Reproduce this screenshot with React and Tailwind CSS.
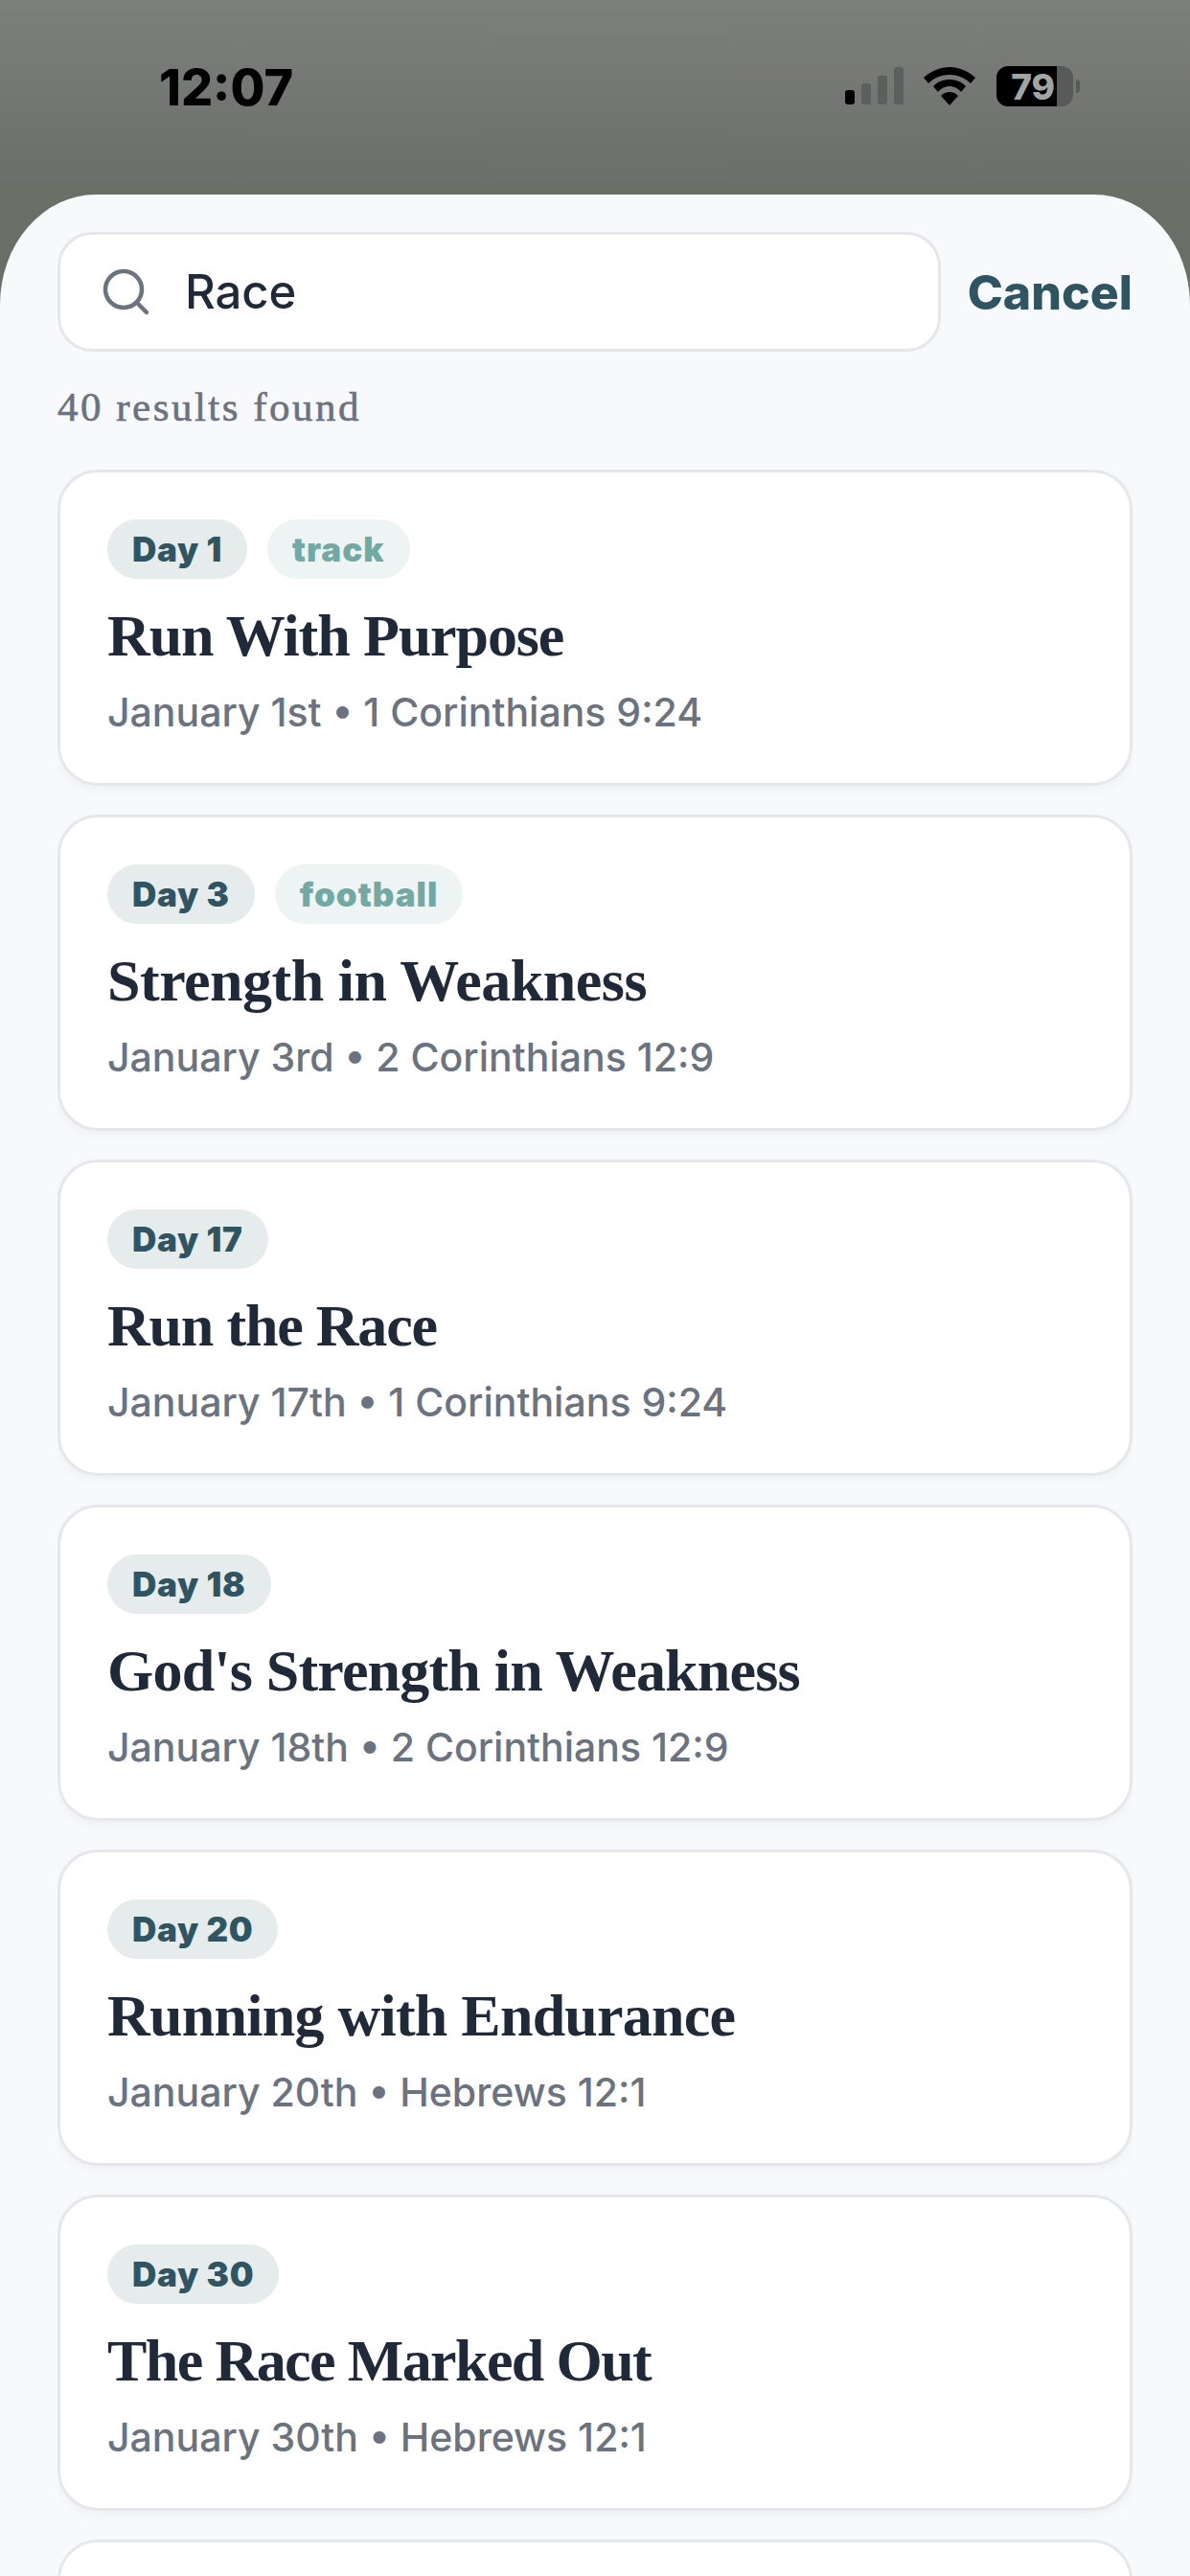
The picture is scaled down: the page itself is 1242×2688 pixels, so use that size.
const cards = [
  { day: "Day 1", tag: "track", title: "Run With Purpose", sub: "January 1st • 1 Corinthians 9:24", tracking: "tracking-[-1.1px]" },
  { day: "Day 3", tag: "football", title: "Strength in Weakness", sub: "January 3rd • 2 Corinthians 12:9", tracking: "tracking-[-0.5px]" },
  { day: "Day 17", title: "Run the Race", sub: "January 17th • 1 Corinthians 9:24", tracking: "tracking-[-1.2px]" },
  { day: "Day 18", title: "God's Strength in Weakness", sub: "January 18th • 2 Corinthians 12:9", tracking: "tracking-[-0.8px]" },
  { day: "Day 20", title: "Running with Endurance", sub: "January 20th • Hebrews 12:1", tracking: "tracking-[-0.75px]" },
  { day: "Day 30", title: "The Race Marked Out", sub: "January 30th • Hebrews 12:1", tracking: "tracking-[-1.6px]" },
];

function Card({ day, tag, title, sub, tracking }) {
  return (
    <div className="h-[330px] shrink-0 rounded-[42px] border-[3px] border-[#e5e7eb] bg-white pl-[49px] pr-[30px] pt-[49px] shadow-[0_4px_12px_rgba(0,0,0,0.04)]">
      <div className="flex h-[62px] gap-[21px]">
        <span className="flex h-[62px] items-center rounded-full bg-[#e6ebeb] px-[26px] text-[35px] font-black tracking-[0.7px] text-[#2f5563]">{day}</span>
        {tag && <span className="flex h-[62px] items-center rounded-full bg-[#eef4f3] px-[26px] text-[35px] font-black tracking-[1px] text-[#72a9a3]">{tag}</span>}
      </div>
      <div className={`mt-[23px] whitespace-nowrap font-['Liberation_Serif',serif] text-[62px] font-bold leading-[72px] text-[#1f2937] ${tracking}`}>{title}</div>
      <div className="mt-[20px] whitespace-nowrap text-[41px] font-medium leading-[48px] text-[#6b7280]">{sub}</div>
    </div>
  );
}

export default function App() {
  return (
    <div className="flex h-[2688px] w-[1242px] flex-col overflow-hidden bg-[linear-gradient(180deg,#7d7f7d_0px,#696e67_210px)] font-['Inter',sans-serif]">
      <div className="flex h-[203px] shrink-0 items-start justify-between pl-[166px] pr-[115px] pt-[62px]">
        <span className="text-[52px] font-extrabold leading-[60px] text-black">12:07</span>
        <div className="flex items-center pt-[7px]">
          <svg width="62" height="40" viewBox="0 0 62 40">
            <rect x="0" y="24" width="10" height="15" rx="3" fill="#000" />
            <rect x="17" y="17" width="10" height="22" rx="3" fill="#5c5f5d" />
            <rect x="34" y="9" width="10" height="30" rx="3" fill="#5c5f5d" />
            <rect x="51" y="0" width="10" height="39" rx="3" fill="#5c5f5d" />
          </svg>
          <svg className="ml-[20px]" width="54" height="40" viewBox="0 0 54 40">
            <path d="M27 0C17 0 8 4 0 11l5 6c6-6 14-9 22-9s16 3 22 9l5-6C46 4 37 0 27 0z" fill="#000" />
            <path d="M27 13c-7 0-12 2-17 7l5 6c3-4 8-6 12-6s9 2 12 6l5-6c-5-5-10-7-17-7z" fill="#000" />
            <path d="M27 26c-4 0-6 1-9 4l9 10 9-10c-3-3-5-4-9-4z" fill="#000" />
          </svg>
          <div className="ml-[22px] flex h-[42px] w-[80px] items-center overflow-hidden rounded-[12px] bg-[#575a58]">
            <div className="flex h-full w-[63px] items-center justify-end bg-black pr-[2px]">
              <span className="text-[37px] font-extrabold leading-none text-[#a3a5a3]">79</span>
            </div>
          </div>
          <div className="ml-[3px] h-[14px] w-[4px] rounded-r-full bg-[#575a58]" />
        </div>
      </div>
      <div className="flex min-h-0 flex-1 flex-col rounded-tl-[100px_115px] rounded-tr-[100px_115px] bg-[#f8f9fb] px-[60px] pt-[39px]">
        <div className="flex h-[125px] shrink-0 items-center justify-between">
          <div className="flex h-full w-[922px] items-center rounded-[36px] border-[3px] border-[#e5e7eb] bg-white pl-[44px]">
            <svg width="50" height="50" viewBox="0 0 50 50" fill="none" stroke="#6b7280" strokeWidth="4.5" strokeLinecap="round">
              <circle cx="22" cy="22" r="19" />
              <path d="M36 36l10 10" />
            </svg>
            <span className="ml-[36px] text-[49px] font-medium leading-none text-[#1f2937]">Race</span>
          </div>
          <span className="text-[50px] font-extrabold leading-none text-[#2f5563]">Cancel</span>
        </div>
        <div className="mt-[34px] h-[48px] shrink-0 font-['Liberation_Serif',serif] text-[43px] leading-[48px] tracking-[2.5px] text-[#6b7280] [-webkit-text-stroke:0.6px_#6b7280]">40 results found</div>
        <div className="mt-[41px] flex min-h-0 flex-col gap-[30px] overflow-hidden">
          {cards.map((c) => <Card key={c.day} {...c} />)}
          <div className="h-[120px] shrink-0 rounded-[42px] border-[3px] border-[#e5e7eb] bg-white" />
        </div>
      </div>
    </div>
  );
}
